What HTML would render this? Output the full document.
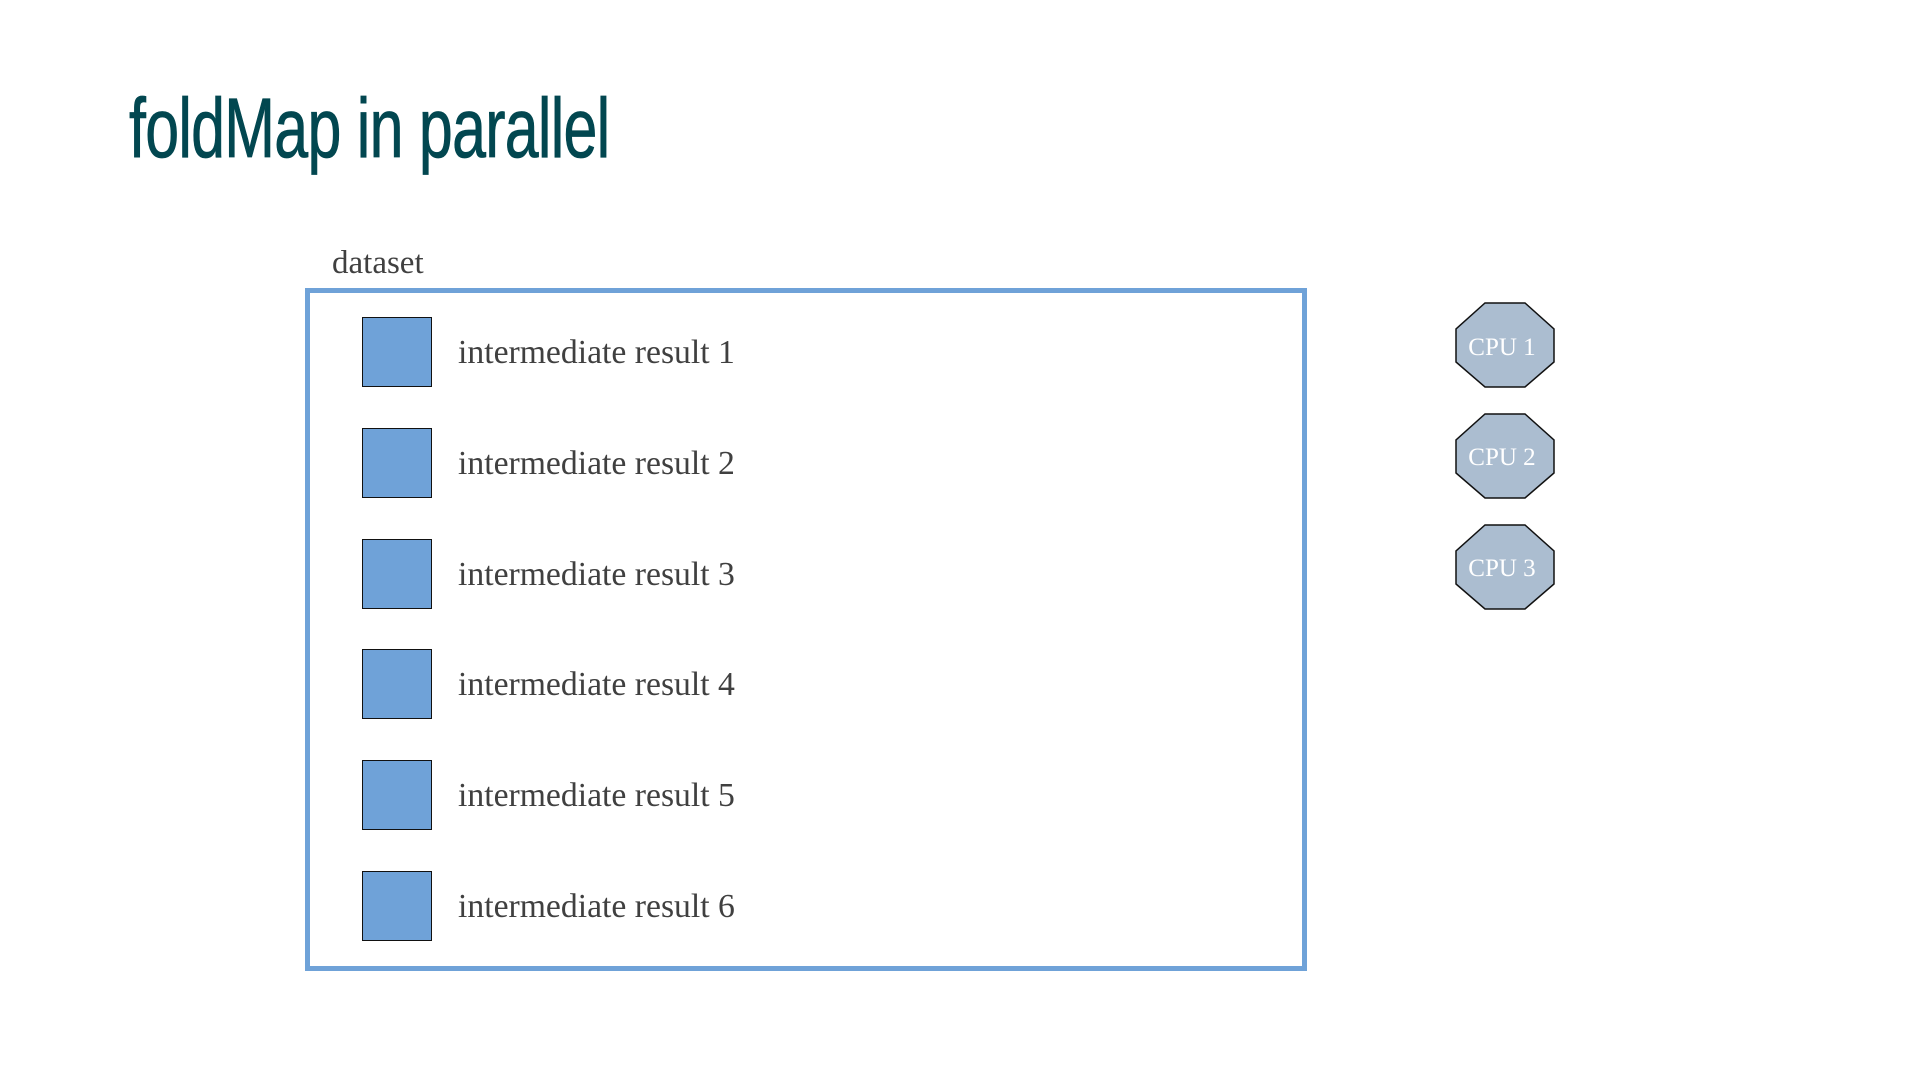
<!DOCTYPE html>
<html><head><meta charset="utf-8"><style>
html,body{margin:0;padding:0;background:#fff;width:1920px;height:1080px;overflow:hidden;position:relative}
.t{position:absolute;left:129px;top:80px;font-family:"Liberation Sans Narrow","Liberation Sans",sans-serif;font-size:84px;color:#024750;white-space:nowrap;transform-origin:0 0;transform:scaleX(0.725);letter-spacing:-1px;-webkit-text-stroke:0.8px #024750}
.ds{position:absolute;left:332px;top:245px;font-family:"Liberation Serif",serif;font-size:33px;color:#404040}
.box{position:absolute;left:305px;top:288px;width:992px;height:673px;border:5px solid #6fa2d8}
.sq{position:absolute;left:362px;width:68px;height:68px;background:#6fa2d8;border:1.5px solid #111}
.lb{position:absolute;left:458px;font-family:"Liberation Serif",serif;font-size:33.7px;color:#404040;white-space:nowrap}
svg{position:absolute;left:0;top:0}
</style></head><body>
<div class="t">foldMap in parallel</div>
<div class="ds">dataset</div>
<div class="box"></div>
<div class="sq" style="top:317px"></div><div class="lb" style="top:334px">intermediate result 1</div>
<div class="sq" style="top:428px"></div><div class="lb" style="top:445px">intermediate result 2</div>
<div class="sq" style="top:539px"></div><div class="lb" style="top:556px">intermediate result 3</div>
<div class="sq" style="top:649px"></div><div class="lb" style="top:666px">intermediate result 4</div>
<div class="sq" style="top:760px"></div><div class="lb" style="top:777px">intermediate result 5</div>
<div class="sq" style="top:871px"></div><div class="lb" style="top:888px">intermediate result 6</div>
<svg width="1920" height="1080">
<g fill="#abbdd0" stroke="#111" stroke-width="1.5">
<polygon points="1485,303 1525,303 1554,329 1554,362 1525,387 1485,387 1456,362 1456,329"/>
<polygon points="1485,414 1525,414 1554,440 1554,473 1525,498 1485,498 1456,473 1456,440"/>
<polygon points="1485,525 1525,525 1554,551 1554,584 1525,609 1485,609 1456,584 1456,551"/>
</g>
<g fill="#fff" font-family="Liberation Serif" font-size="25" text-anchor="middle">
<text x="1502" y="355">CPU 1</text>
<text x="1502" y="465">CPU 2</text>
<text x="1502" y="576">CPU 3</text>
</g>
</svg>
</body></html>
